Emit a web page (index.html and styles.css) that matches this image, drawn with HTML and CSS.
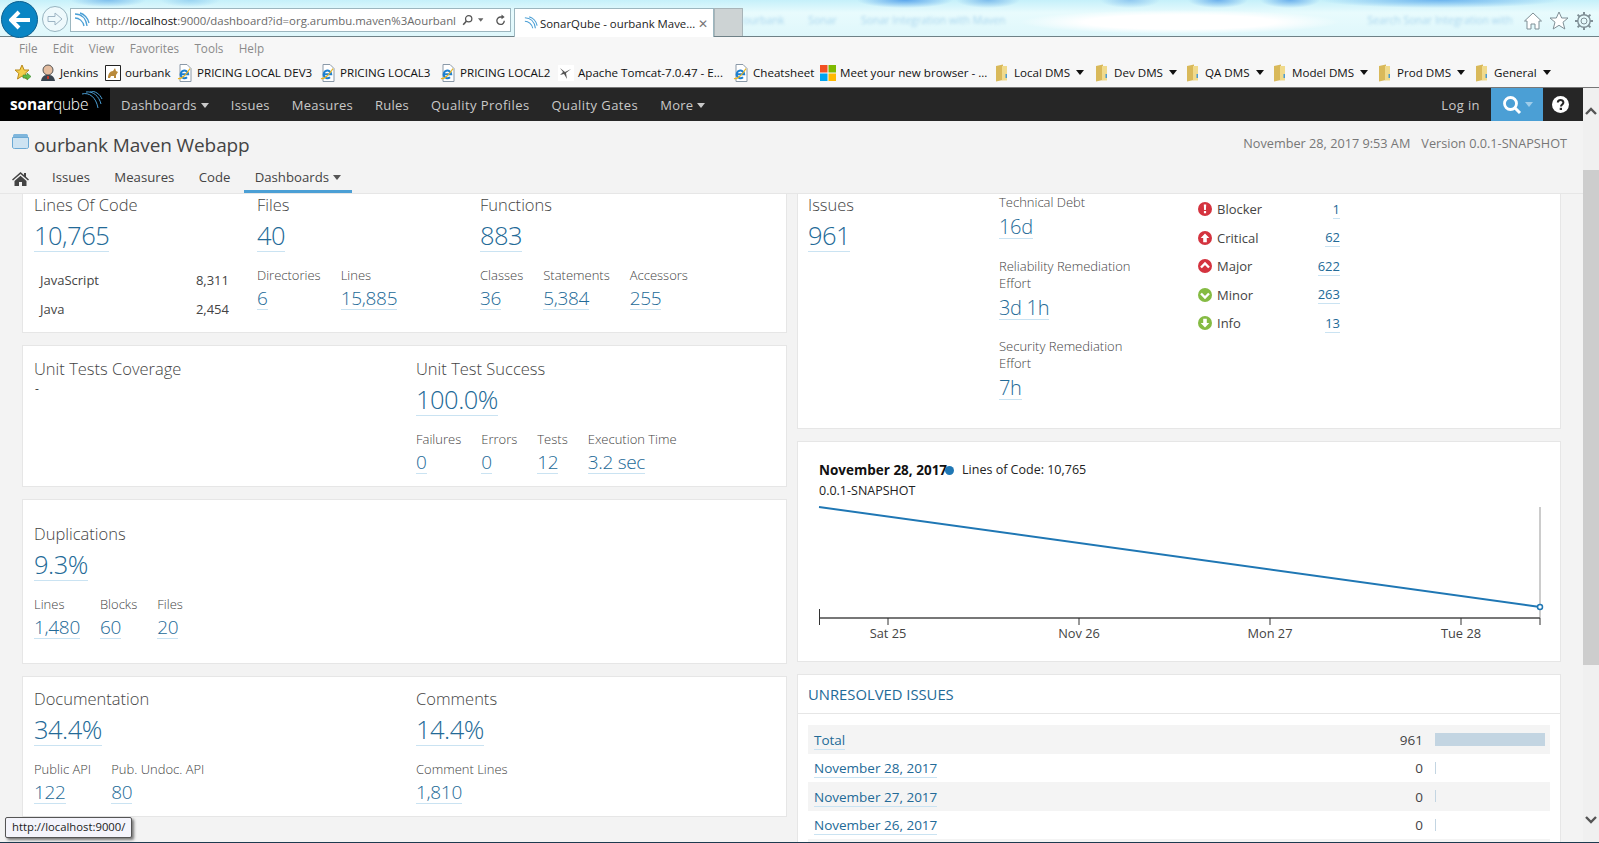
FILE: index.html
```html
<!DOCTYPE html>
<html lang="en">
<head>
    <meta charset="UTF-8">
    <title>SonarQube - ourbank Maven Webapp</title>
    <link rel="stylesheet" href="styles.css">
</head>
<body>
    <svg class="defs" width="0" height="0">
        <defs>
            <symbol id="ie" viewBox="0 0 16 18">
                <path d="M3 .5h7l4 4v13H3z" fill="#fff" stroke="#8a99a8"/>
                <path d="M3.800 10.200h7.400a3.800 3.800 0 1 0-1.200 3" fill="none" stroke="#1b7fd0" stroke-width="2"/>
                <path d="M1 14.500c3 1 8-3 12-10" fill="none" stroke="#e9b520" stroke-width="1.200"/>
            </symbol>
            <symbol id="folder" viewBox="0 0 13 18">
                <path d="M1 2l7-1.5V16l-7 1.5z" fill="#d9b95a"/>
                <path d="M7 2h5v14.5H7z" fill="#f0da8c"/>
                <path d="M10.500 10h1.500v4h-1.500z" fill="#4a9ad0"/>
            </symbol>
            <symbol id="caret" viewBox="0 0 8 5">
                <path d="M0 0h8L4 5z" fill="currentColor"/>
            </symbol>
            <symbol id="sev-blocker" viewBox="0 0 14 14">
                <circle cx="7" cy="7" r="7" fill="#d4333f"/>
                <path d="M5.800 2.500h2.400l-.3 5.500H6.100zM5.900 9h2.200v2.300H5.900z" fill="#fff"/>
            </symbol>
            <symbol id="sev-critical" viewBox="0 0 14 14">
                <circle cx="7" cy="7" r="7" fill="#d4333f"/>
                <path d="M7 2.500l4.300 4.400H8.800v4.300H5.200V6.900H2.700z" fill="#fff"/>
            </symbol>
            <symbol id="sev-major" viewBox="0 0 14 14">
                <circle cx="7" cy="7" r="7" fill="#d4333f"/>
                <path d="M3 8.500l4-4 4 4" fill="none" stroke="#fff" stroke-width="2.400"/>
            </symbol>
            <symbol id="sev-minor" viewBox="0 0 14 14">
                <circle cx="7" cy="7" r="7" fill="#85bb43"/>
                <path d="M3 5.500l4 4 4-4" fill="none" stroke="#fff" stroke-width="2.400"/>
            </symbol>
            <symbol id="sev-info" viewBox="0 0 14 14">
                <circle cx="7" cy="7" r="7" fill="#85bb43"/>
                <path d="M7 11.500L2.700 7.100h2.500V2.800h3.600v4.300h2.500z" fill="#fff"/>
            </symbol>
        </defs>
    </svg>

    <header class="ie-top">
        <div class="ie-back">
            <svg width="22" height="20" viewBox="0 0 22 20"><path d="M10 2L2 10l8 8M2.500 10H21" fill="none" stroke="#fff" stroke-width="4"/></svg>
        </div>
        <div class="ie-forward">
            <svg width="16" height="14" viewBox="0 0 16 14"><path d="M1 4.500h7V1l7 6-7 6V9.500H1z" fill="none" stroke="#9db4c4"/></svg>
        </div>
        <div class="ie-address">
            <svg class="ie-favicon" width="16" height="16" viewBox="0 0 16 16"><path d="M1 2c6 0 11 4 12 12M1 6c4 0 8 3 9 8M6 1c4 1 8 5 9 10" fill="none" stroke="#4b9fd5" stroke-width="1.300"/></svg>
            <span class="ie-url">http://<b>localhost</b>:9000/dashboard?id=org.arumbu.maven%3Aourbanl</span>
            <svg width="14" height="14" viewBox="0 0 14 14"><circle cx="8.500" cy="5.500" r="4" fill="none" stroke="#555" stroke-width="1.600"/><path d="M5.500 8.500L1.500 13" stroke="#555" stroke-width="2"/></svg>
            <svg class="ie-small-caret" width="7" height="4"><use href="#caret"/></svg>
            <svg class="ie-refresh" width="12" height="14" viewBox="0 0 12 14"><path d="M10.500 8A4.700 4.700 0 1 1 6 3.200h2" fill="none" stroke="#555" stroke-width="1.700"/><path d="M7 0l4 3.200L7 6z" fill="#555"/></svg>
        </div>
        <div class="ie-tab">
            <svg class="ie-tab-icon" width="14" height="14" viewBox="0 0 16 16"><path d="M1 2c6 0 11 4 12 12M1 6c4 0 8 3 9 8M6 1c4 1 8 5 9 10" fill="none" stroke="#4b9fd5" stroke-width="1.300"/></svg>
            <span class="ie-tab-title">SonarQube - ourbank Mave...</span>
            <span class="ie-tab-close">✕</span>
        </div>
        <div class="ie-newtab"></div>
        <div class="ie-blur">
            <span>ourbank</span>
            <span>Sonar</span>
            <span>Sonar Integration with Maven</span>
            <span class="ie-blur-far">Search Sonar Integration with</span>
        </div>
        <div class="ie-tools">
            <svg width="20" height="20" viewBox="0 0 20 20"><path d="M1.500 10L10 2l8.500 8H16v8h-4v-5H8v5H4v-8z" fill="#fff" stroke="#7f8f96"/></svg>
            <svg width="20" height="20" viewBox="0 0 20 20"><path d="M10 1l2.700 6H19l-5 4.200L15.800 18 10 14.300 4.200 18 6 11.200 1 7h6.300z" fill="#fff" stroke="#7f8f96"/></svg>
            <svg width="18" height="18" viewBox="0 0 18 18"><circle cx="9" cy="9" r="3" fill="none" stroke="#7f8f96"/><circle cx="9" cy="9" r="6.200" fill="none" stroke="#7f8f96" stroke-width="1.400"/><path d="M9 0v3M9 15v3M0 9h3M15 9h3M2.600 2.600l2 2M13.400 13.400l2 2M15.400 2.600l-2 2M4.600 13.400l-2 2" stroke="#7f8f96" stroke-width="2"/></svg>
        </div>
    </header>

    <div class="ie-menu">
        <span>File</span><span>Edit</span><span>View</span><span>Favorites</span><span>Tools</span><span>Help</span>
    </div>

    <div class="ie-favs">
        <svg class="fav-star" width="18" height="18" viewBox="0 0 18 18"><path d="M8 1l2.200 5H15l-3.800 3.400L12.500 15 8 12 3.500 15l1.300-5.600L1 6h4.800z" fill="#f5cf4a" stroke="#b98a1d"/><path d="M9 11h4V9l4 3.500-4 3.500v-2H9z" fill="#5fb848" stroke="#3b8a2c" stroke-width=".6"/></svg>
        <span class="fav w-jenkins">
            <svg width="16" height="18" viewBox="0 0 16 18"><circle cx="8" cy="6" r="5" fill="#e4bda0" stroke="#555"/><path d="M1 17c1-5 3-6 7-6s6 1 7 6z" fill="#39444f"/><path d="M7 12h2v3H7z" fill="#c0392b"/></svg>
            Jenkins
        </span>
        <span class="fav w-ourbank">
            <svg width="16" height="16" viewBox="0 0 16 16"><path d="M.5.500h15v15H.5z" fill="#fff" stroke="#222"/><path d="M3 13c0-4 2-7 5-7l2-3 1 3 2 1-2 3v3H9v-2H6l-1 2z" fill="#b98a3c"/></svg>
            ourbank
        </span>
        <span class="fav w-dev3"><svg width="16" height="18"><use href="#ie"/></svg>PRICING LOCAL DEV3</span>
        <span class="fav w-local3"><svg width="16" height="18"><use href="#ie"/></svg>PRICING LOCAL3</span>
        <span class="fav w-local2"><svg width="16" height="18"><use href="#ie"/></svg>PRICING LOCAL2</span>
        <span class="fav w-tomcat">
            <svg width="16" height="16" viewBox="0 0 16 16"><path d="M0 0h16v16H0z" fill="#fff"/><path d="M2 3l5 4 6-3-5 4 1 6-3-5-4 1 3-3z" fill="#555"/></svg>
            Apache Tomcat-7.0.47 - E...
        </span>
        <span class="fav w-cheat"><svg width="16" height="18"><use href="#ie"/></svg>Cheatsheet</span>
        <span class="fav w-meet">
            <svg width="16" height="16" viewBox="0 0 16 16"><path d="M0 0h7.500v7.500H0z" fill="#f25022"/><path d="M8.500 0H16v7.500H8.500z" fill="#7fba00"/><path d="M0 8.500h7.500V16H0z" fill="#00a4ef"/><path d="M8.500 8.500H16V16H8.500z" fill="#ffb900"/></svg>
            Meet your new browser - ...
        </span>
        <span class="fav fav-folder w-localdms"><svg width="13" height="18"><use href="#folder"/></svg>Local DMS<svg class="fav-caret" width="8" height="5"><use href="#caret"/></svg></span>
        <span class="fav fav-folder w-devdms"><svg width="13" height="18"><use href="#folder"/></svg>Dev DMS<svg class="fav-caret" width="8" height="5"><use href="#caret"/></svg></span>
        <span class="fav fav-folder w-qadms"><svg width="13" height="18"><use href="#folder"/></svg>QA DMS<svg class="fav-caret" width="8" height="5"><use href="#caret"/></svg></span>
        <span class="fav fav-folder w-modeldms"><svg width="13" height="18"><use href="#folder"/></svg>Model DMS<svg class="fav-caret" width="8" height="5"><use href="#caret"/></svg></span>
        <span class="fav fav-folder w-proddms"><svg width="13" height="18"><use href="#folder"/></svg>Prod DMS<svg class="fav-caret" width="8" height="5"><use href="#caret"/></svg></span>
        <span class="fav fav-folder"><svg width="13" height="18"><use href="#folder"/></svg>General<svg class="fav-caret" width="8" height="5"><use href="#caret"/></svg></span>
    </div>

    <div class="viewport">
        <div class="site">
            <nav class="navbar">
                <div class="logo">
                    <span class="logo-text"><b>sonar</b>qube</span>
                    <svg class="logo-arcs" width="22" height="20" viewBox="0 0 22 20"><path d="M1 3c7-2 14 3 16 14M5 1c7-1 13 4 15 12M9 0c5 0 10 3 12 8" fill="none" stroke="#4b9fd5" stroke-width="1"/></svg>
                </div>
                <ul class="nav-list">
                    <li>Dashboards<svg class="nav-caret" width="8" height="5"><use href="#caret"/></svg></li>
                    <li>Issues</li>
                    <li>Measures</li>
                    <li>Rules</li>
                    <li class="nav-wide">Quality Profiles</li>
                    <li class="nav-wide">Quality Gates</li>
                    <li>More<svg class="nav-caret" width="8" height="5"><use href="#caret"/></svg></li>
                </ul>
                <span class="nav-login">Log in</span>
                <div class="nav-search">
                    <svg width="20" height="20" viewBox="0 0 20 20"><circle cx="8.500" cy="8.500" r="6" fill="none" stroke="#fff" stroke-width="2.800"/><path d="M13 13l5 5" stroke="#fff" stroke-width="3"/></svg>
                    <svg class="nav-search-caret" width="8" height="5"><use href="#caret"/></svg>
                </div>
                <div class="nav-help">
                    <svg width="17" height="17" viewBox="0 0 17 17"><circle cx="8.500" cy="8.500" r="8.500" fill="#fff"/><path d="M5.800 6.500c0-3.400 5.600-3.400 5.600 0 0 2-2.400 2-2.400 4" fill="none" stroke="#262626" stroke-width="2"/><path d="M7.700 11.800H10v2.200H7.700z" fill="#262626"/></svg>
                </div>
            </nav>

            <div class="context">
                <div class="context-head">
                    <svg class="project-icon" width="17" height="16" viewBox="0 0 17 16"><path d="M1 4V2.500C1 1.500 2 1 3 1h11c1 0 2 .5 2 1.500V4z" fill="#7fb6dc"/><path d="M.5 4.500h16V14c0 1-1 1.500-2 1.500H2.500c-1 0-2-.5-2-1.500z" fill="#cde3f2" stroke="#6ba9d4"/></svg>
                    <h1 class="project-name">ourbank Maven Webapp</h1>
                    <span class="project-date">November 28, 2017 9:53 AM</span>
                    <span class="project-version">Version 0.0.1-SNAPSHOT</span>
                </div>
                <div class="context-tabs">
                    <svg class="home-icon" width="17" height="14" viewBox="0 0 17 14"><path d="M8.500 0L0 7.500l1 1L8.500 2 16 8.500l1-1-3-2.700V1h-2v2z" fill="#444"/><path d="M2.500 9l6-5.200 6 5.200v5H10v-4H7v4H2.500z" fill="#444"/></svg>
                    <span class="tab">Issues</span>
                    <span class="tab">Measures</span>
                    <span class="tab">Code</span>
                    <span class="tab tab-active">Dashboards<svg class="tab-caret" width="8" height="5"><use href="#caret"/></svg></span>
                </div>
            </div>

            <main class="content">
                <div class="column">
                    <section class="card card-size">
                        <div class="cols3">
                            <div>
                                <h3 class="heading">Lines Of Code</h3>
                                <a class="big">10,765</a>
                                <table class="langs">
                                    <tr><td>JavaScript</td><td class="num">8,311</td></tr>
                                    <tr><td>Java</td><td class="num">2,454</td></tr>
                                </table>
                            </div>
                            <div>
                                <h3 class="heading">Files</h3>
                                <a class="big">40</a>
                                <div class="subs">
                                    <div><span class="label">Directories</span><a class="small">6</a></div>
                                    <div><span class="label">Lines</span><a class="small">15,885</a></div>
                                </div>
                            </div>
                            <div>
                                <h3 class="heading">Functions</h3>
                                <a class="big">883</a>
                                <div class="subs">
                                    <div><span class="label">Classes</span><a class="small">36</a></div>
                                    <div><span class="label">Statements</span><a class="small">5,384</a></div>
                                    <div><span class="label">Accessors</span><a class="small">255</a></div>
                                </div>
                            </div>
                        </div>
                    </section>

                    <section class="card card-tests">
                        <div class="cols2">
                            <div>
                                <h3 class="heading">Unit Tests Coverage</h3>
                                <div class="dash">-</div>
                            </div>
                            <div>
                                <h3 class="heading">Unit Test Success</h3>
                                <a class="big">100.0%</a>
                                <div class="subs">
                                    <div><span class="label">Failures</span><a class="small">0</a></div>
                                    <div><span class="label">Errors</span><a class="small">0</a></div>
                                    <div><span class="label">Tests</span><a class="small">12</a></div>
                                    <div><span class="label">Execution Time</span><a class="small">3.2 sec</a></div>
                                </div>
                            </div>
                        </div>
                    </section>

                    <section class="card card-dup">
                        <h3 class="heading">Duplications</h3>
                        <a class="big">9.3%</a>
                        <div class="subs">
                            <div><span class="label">Lines</span><a class="small">1,480</a></div>
                            <div><span class="label">Blocks</span><a class="small">60</a></div>
                            <div><span class="label">Files</span><a class="small">20</a></div>
                        </div>
                    </section>

                    <section class="card card-doc">
                        <div class="cols2">
                            <div>
                                <h3 class="heading">Documentation</h3>
                                <a class="big">34.4%</a>
                                <div class="subs">
                                    <div><span class="label">Public API</span><a class="small">122</a></div>
                                    <div><span class="label">Pub. Undoc. API</span><a class="small">80</a></div>
                                </div>
                            </div>
                            <div>
                                <h3 class="heading">Comments</h3>
                                <a class="big">14.4%</a>
                                <div class="subs">
                                    <div><span class="label">Comment Lines</span><a class="small">1,810</a></div>
                                </div>
                            </div>
                        </div>
                    </section>
                </div>

                <div class="column">
                    <section class="card card-issues">
                        <div class="issues-main">
                            <h3 class="heading">Issues</h3>
                            <a class="big">961</a>
                        </div>
                        <div class="issues-debt">
                            <div class="debt"><span class="label">Technical Debt</span><a class="medium">16d</a></div>
                            <div class="debt"><span class="label">Reliability Remediation Effort</span><a class="medium">3d 1h</a></div>
                            <div class="debt"><span class="label">Security Remediation Effort</span><a class="medium">7h</a></div>
                        </div>
                        <ul class="severities">
                            <li><svg width="14" height="14"><use href="#sev-blocker"/></svg><span>Blocker</span><a>1</a></li>
                            <li><svg width="14" height="14"><use href="#sev-critical"/></svg><span>Critical</span><a>62</a></li>
                            <li><svg width="14" height="14"><use href="#sev-major"/></svg><span>Major</span><a>622</a></li>
                            <li><svg width="14" height="14"><use href="#sev-minor"/></svg><span>Minor</span><a>263</a></li>
                            <li><svg width="14" height="14"><use href="#sev-info"/></svg><span>Info</span><a>13</a></li>
                        </ul>
                    </section>

                    <section class="card card-chart">
                        <div class="chart-legend">
                            <b>November 28, 2017</b><span class="chart-dot"></span><span>Lines of Code: 10,765</span>
                        </div>
                        <div class="chart-version">0.0.1-SNAPSHOT</div>
                        <svg class="chart" width="724" height="140" viewBox="0 0 724 140">
                            <path d="M721 2V113" stroke="#999" stroke-width="1"/>
                            <path d="M0 113H721" stroke="#777" stroke-width="2"/>
                            <path d="M.5 104V120M69 113V120M260 113V120M451 113V120M642 113V120M721 113V120" stroke="#333" stroke-width="1"/>
                            <path d="M0 2L721 102" stroke="#1f77b4" stroke-width="2" fill="none"/>
                            <circle cx="721" cy="102" r="2.500" fill="#fff" stroke="#1f77b4" stroke-width="1.500"/>
                            <g class="chart-ticks">
                                <text x="69" y="133" text-anchor="middle">Sat 25</text>
                                <text x="260" y="133" text-anchor="middle">Nov 26</text>
                                <text x="451" y="133" text-anchor="middle">Mon 27</text>
                                <text x="642" y="133" text-anchor="middle">Tue 28</text>
                            </g>
                        </svg>
                    </section>

                    <section class="card card-unresolved">
                        <h3 class="panel-title">UNRESOLVED ISSUES</h3>
                        <table class="period-table">
                            <tr><td><a>Total</a></td><td class="period-count">961</td><td class="period-bar"><span class="bar bar-full"></span></td></tr>
                            <tr><td><a>November 28, 2017</a></td><td class="period-count">0</td><td class="period-bar"><span class="bar"></span></td></tr>
                            <tr><td><a>November 27, 2017</a></td><td class="period-count">0</td><td class="period-bar"><span class="bar"></span></td></tr>
                            <tr><td><a>November 26, 2017</a></td><td class="period-count">0</td><td class="period-bar"><span class="bar"></span></td></tr>
                            <tr><td></td><td></td><td></td></tr>
                        </table>
                    </section>
                </div>
            </main>
        </div>

        <div class="scrollbar">
            <svg class="scroll-up" width="12" height="8" viewBox="0 0 12 8"><path d="M1 7l5-5 5 5" fill="none" stroke="#555" stroke-width="2.400"/></svg>
            <div class="scroll-thumb"></div>
            <svg class="scroll-down" width="12" height="8" viewBox="0 0 12 8"><path d="M1 1l5 5 5-5" fill="none" stroke="#555" stroke-width="2.400"/></svg>
        </div>
    </div>

    <div class="url-tip">http://localhost:9000/</div>
</body>
</html>
```

FILE: styles.css
```css
* {
    box-sizing: border-box;
}
html, body {
    margin: 0;
    height: 843px;
    overflow: hidden;
}
body {
    position: relative;
    display: flex;
    flex-direction: column;
    font-family: "Open Sans", sans-serif;
    font-size: 12px;
    color: #444;
    background: #f3f3f3;
    border-bottom: 1px solid #1d3a4f;
}
a {
    color: #236a97;
}
h1, h3 {
    margin: 0;
    font-weight: 300;
}
ul {
    margin: 0;
    padding: 0;
    list-style: none;
}
table {
    border-collapse: collapse;
}
td {
    padding: 0;
}
.defs {
    position: absolute;
}

/* browser chrome */
.ie-top {
    position: relative;
    display: flex;
    align-items: flex-start;
    height: 37px;
    flex: none;
    border-bottom: 1px solid #6f8187;
    background:
        radial-gradient(ellipse 38px 7px at 108px 0, #7fc0ee, transparent),
        radial-gradient(ellipse 30px 7px at 190px 0, #9ad4f2, transparent),
        radial-gradient(ellipse 48px 8px at 905px 0, #5ba6ec, transparent),
        radial-gradient(ellipse 32px 8px at 988px 0, #7dbcec, transparent),
        radial-gradient(ellipse 30px 8px at 1130px 0, #90c8f0, transparent),
        radial-gradient(ellipse 30px 8px at 1218px 0, #6cb0ec, transparent),
        radial-gradient(ellipse 30px 8px at 1290px 0, #6cb0ec, transparent),
        radial-gradient(ellipse 120px 8px at 1440px 0, #6cb4ee, transparent),
        radial-gradient(ellipse 160px 12px at 1180px 22px, #fff 60%, transparent),
        linear-gradient(#c5f0fa, #e8fbfd 35%, #dff7fb 100%);
}
.ie-back {
    display: flex;
    align-items: center;
    justify-content: center;
    flex: none;
    width: 37px;
    height: 37px;
    margin: 1px 0 0 1px;
    border-radius: 50%;
    background: #0a85c4;
    border: 1px solid #0b5f8f;
}
.ie-forward {
    display: flex;
    align-items: center;
    justify-content: center;
    flex: none;
    width: 26px;
    height: 26px;
    margin: 6px 0 0 4px;
    border-radius: 50%;
    background: #eef9fc;
    border: 1px solid #97b4c0;
}
.ie-address {
    display: flex;
    align-items: center;
    gap: 5px;
    flex: none;
    width: 441px;
    height: 24px;
    margin: 8px 0 0 2px;
    padding: 0 5px 0 3px;
    background: #fff;
    border: 1px solid #9cb6bf;
    white-space: nowrap;
}
.ie-favicon {
    flex: none;
}
.ie-url {
    flex: none;
    width: 361px;
    margin: 0 0 0 1px;
    font-size: 11.400px;
    color: #6a6a6a;
}
.ie-url b {
    font-weight: 400;
    color: #111;
}
.ie-small-caret {
    color: #666;
}
.ie-refresh {
    margin-left: 7px;
}
.ie-tab {
    display: flex;
    align-items: center;
    flex: none;
    width: 200px;
    height: 29px;
    margin: 8px 0 0 3px;
    padding: 0 5px 0 9px;
    background: #fff;
    border: 1px solid #9cb6bf;
    border-bottom: 0;
    white-space: nowrap;
}
.ie-tab-icon {
    margin-right: 2px;
}
.ie-tab-title {
    flex: 1;
    font-size: 11.400px;
    color: #222;
}
.ie-tab-close {
    font-size: 12px;
    color: #777;
}
.ie-newtab {
    flex: none;
    width: 29px;
    height: 28px;
    margin-top: 8px;
    background: #cdd3d4;
    border: 1px solid #a8b4b8;
    border-bottom: 0;
}
.ie-blur {
    flex: 1;
    min-width: 0;
    overflow: hidden;
    display: flex;
    gap: 24px;
    padding-top: 13px;
    font-size: 10.500px;
    color: #a9d5ee;
    filter: blur(1.4px);
    white-space: nowrap;
}
.ie-blur-far {
    margin-left: 338px;
}
.ie-tools {
    display: flex;
    align-items: center;
    flex: none;
    gap: 6px;
    height: 24px;
    margin: 9px 6px 0 0;
}

.ie-menu {
    display: flex;
    gap: 15.300px;
    flex: none;
    height: 23px;
    padding: 3px 0 0 19px;
    background: #f7f7f7;
    color: #8a8a8a;
    font-size: 11.700px;
}
.ie-favs {
    display: flex;
    align-items: center;
    flex: none;
    height: 28px;
    padding: 0 0 2px 14px;
    background: #f7f7f7;
    border-bottom: 1px solid #777;
    color: #111;
    font-size: 11.600px;
    white-space: nowrap;
}
.fav-star {
    margin-right: 8px;
}
.fav {
    display: flex;
    align-items: center;
    gap: 4px;
    flex: none;
}
.fav-folder {
    gap: 6px;
}
.fav-caret {
    color: #111;
}
.w-jenkins { width: 65px; }
.w-ourbank { width: 72px; }
.w-dev3 { width: 143px; }
.w-local3 { width: 120px; }
.w-local2 { width: 118px; }
.w-tomcat { width: 175px; }
.w-cheat { width: 87px; }
.w-meet { width: 175px; }
.w-localdms { width: 100px; }
.w-devdms { width: 91px; }
.w-qadms { width: 87px; }
.w-modeldms { width: 105px; }
.w-proddms { width: 97px; }

/* page frame */
.viewport {
    display: flex;
    flex: 1;
    min-height: 0;
}
.site {
    flex: 1;
    min-width: 0;
    display: flex;
    flex-direction: column;
}
.scrollbar {
    position: relative;
    display: flex;
    flex-direction: column;
    align-items: center;
    width: 16px;
    flex: none;
    background: #f0f0f0;
}
.scroll-up {
    margin-top: 19px;
}
.scroll-thumb {
    width: 16px;
    height: 495px;
    margin-top: 55px;
    background: #cdcdcd;
}
.scroll-down {
    margin-top: 151px;
}

/* sonarqube nav */
.navbar {
    display: flex;
    align-items: stretch;
    flex: none;
    height: 33px;
    background: #262626;
    color: #c9c9c9;
    font-size: 13px;
}
.logo {
    position: relative;
    width: 110px;
    padding: 5px 0 0 10px;
    background: #000;
    color: #fff;
    font-size: 15.500px;
    font-weight: 300;
    letter-spacing: -.2px;
}
.logo-text b {
    font-weight: 700;
}
.logo-arcs {
    position: absolute;
    top: 3px;
    left: 81px;
}
.nav-list {
    flex: 1;
    display: flex;
    align-items: center;
    gap: 22px;
    padding-left: 11px;
    letter-spacing: .25px;
}
.nav-wide {
    letter-spacing: .42px;
}
.nav-caret {
    margin-left: 4px;
    vertical-align: 2px;
    color: #c9c9c9;
}
.nav-login {
    align-self: center;
    margin-right: 11px;
    letter-spacing: .4px;
}
.nav-search {
    display: flex;
    align-items: center;
    gap: 3px;
    width: 52px;
    padding-left: 11px;
    background: #4b9fd5;
}
.nav-search-caret {
    color: #9fcdea;
}
.nav-help {
    display: flex;
    align-items: center;
    justify-content: center;
    width: 40px;
    padding-right: 6px;
}

/* context header */
.context {
    flex: none;
    height: 73px;
    background: #f3f3f3;
    border-bottom: 1px solid #e6e6e6;
}
.context-head {
    display: flex;
    align-items: center;
    height: 46px;
    padding: 0 16px 0 12px;
}
.project-icon {
    margin: -6px 5px 0 0;
}
.project-name {
    flex: 1;
    margin-top: 2px;
    font-size: 19px;
    font-weight: 400;
    letter-spacing: -.1px;
    color: #444;
}
.project-date, .project-version {
    margin-top: -2px;
    color: #777;
    font-size: 12.700px;
}
.project-version {
    margin-left: 11px;
}
.context-tabs {
    display: flex;
    align-items: center;
    height: 26px;
    padding-left: 11px;
}
.home-icon {
    margin: -3px 23px 0 1px;
}
.tab {
    height: 26px;
    margin-right: 24.300px;
    padding-top: 1px;
    font-size: 13.200px;
}
.tab-active {
    margin: 0 0 0 -11px;
    padding: 1px 11px 0;
    border-bottom: 3px solid #4b9fd5;
}
.tab-caret {
    margin-left: 4px;
    vertical-align: 2px;
    color: #555;
}

/* dashboard */
.content {
    flex: 1;
    min-height: 0;
    overflow: hidden;
    display: grid;
    grid-template-columns: 765px 764px;
    gap: 10px;
    padding-left: 22px;
    align-items: start;
}
.column {
    display: flex;
    flex-direction: column;
    gap: 12px;
}
.card {
    background: #fff;
    border: 1px solid #e6e6e6;
    padding: 0 11px;
}
.card-size { height: 139px; border-top: 0; }
.card-tests { height: 142px; padding-top: 12px; }
.card-dup { height: 165px; padding-top: 23px; }
.card-doc { height: 141px; padding-top: 11px; }

.cols3 {
    display: grid;
    grid-template-columns: 223px 223px 223px;
}
.cols2 {
    display: grid;
    grid-template-columns: 382px 1fr;
}
.heading {
    height: 23px;
    font-size: 16.500px;
    line-height: 22px;
    color: #444;
}
.big, .medium, .small {
    display: table;
    font-weight: 300;
    line-height: 1;
    border-bottom: 1px solid #cae3f2;
}
.big {
    margin-top: 5px;
    padding-top: 1px;
    height: 30px;
    font-size: 25.500px;
    letter-spacing: -.5px;
}
.subs {
    display: flex;
    gap: 20px;
    margin-top: 14.500px;
}
.label {
    display: block;
    font-size: 13px;
    font-weight: 300;
    line-height: 17px;
    color: #444;
}
.small {
    margin-top: 3px;
    padding-top: 2px;
    height: 23px;
    font-size: 19px;
    letter-spacing: -.3px;
}
.dash {
    margin-top: -1px;
    padding-left: 1px;
}
.langs {
    width: 189px;
    margin: 13px 0 0 6px;
    font-size: 13px;
}
.langs td {
    height: 29px;
}
.langs .num {
    text-align: right;
}

/* issues */
.card-issues {
    display: flex;
    height: 235px;
    padding-left: 10px;
    border-top: 0;
}
.issues-main {
    width: 191px;
}
.issues-debt {
    width: 199px;
}
.debt {
    width: 150px;
    margin-bottom: 18.500px;
}
.medium {
    margin-top: 2px;
    padding-top: 4px;
    height: 26px;
    font-size: 20px;
    letter-spacing: -.3px;
}
.severities {
    width: 142px;
    padding-top: 1px;
}
.severities li {
    display: flex;
    align-items: center;
    gap: 5px;
    height: 28.500px;
    font-size: 13px;
}
.severities span {
    flex: 1;
}
.severities a {
    border-bottom: 1px solid #cae3f2;
    line-height: 18px;
}

/* chart */
.card-chart {
    height: 221px;
    padding: 19px 21px 0;
    color: #222;
    font-size: 12.500px;
}
.chart-legend {
    display: flex;
    align-items: center;
    line-height: 18px;
}
.chart-legend b {
    font-weight: 700;
    font-size: 13.500px;
    color: #111;
}
.chart-dot {
    width: 9px;
    height: 9px;
    margin: 0 8px 0 -2px;
    border-radius: 50%;
    background: #1f77b4;
}
.chart-version {
    margin-top: 3px;
    line-height: 18px;
}
.chart {
    display: block;
    margin-top: 5px;
    overflow: visible;
}
.chart-ticks text {
    font-family: "Open Sans", sans-serif;
    font-size: 12.800px;
    fill: #444;
}

/* unresolved */
.card-unresolved {
    padding: 0;
}
.panel-title {
    height: 39px;
    padding: 9px 10px 0;
    font-size: 14.800px;
    font-weight: 400;
    line-height: 20px;
    color: #236a97;
    border-bottom: 1px solid #e6e6e6;
}
.period-table {
    width: 742px;
    margin: 11px 0 0 10px;
    font-size: 13.500px;
}
.period-table tr {
    height: 28.500px;
}
.period-table tr:nth-child(odd) {
    background: #f4f4f4;
}
.period-table td:first-child {
    padding: 1px 0 0 6px;
}
.period-table a {
    border-bottom: 1px solid #cae3f2;
}
.period-count {
    width: 100px;
    padding-top: 1px;
    text-align: right;
}
.period-bar {
    width: 127px;
    padding: 0 5px 0 12px;
}
.bar {
    display: block;
    width: 1px;
    height: 12px;
    background: #c3d5e2;
}
.bar-full {
    width: 110px;
    height: 13px;
}

.url-tip {
    position: absolute;
    left: 5px;
    bottom: 4px;
    padding: 1px 6px;
    height: 21px;
    font-size: 11.300px;
    background: #f4f4fb;
    border: 1px solid #555;
    border-radius: 2px;
    box-shadow: 2px 2px 3px #777;
    color: #222;
}
```
